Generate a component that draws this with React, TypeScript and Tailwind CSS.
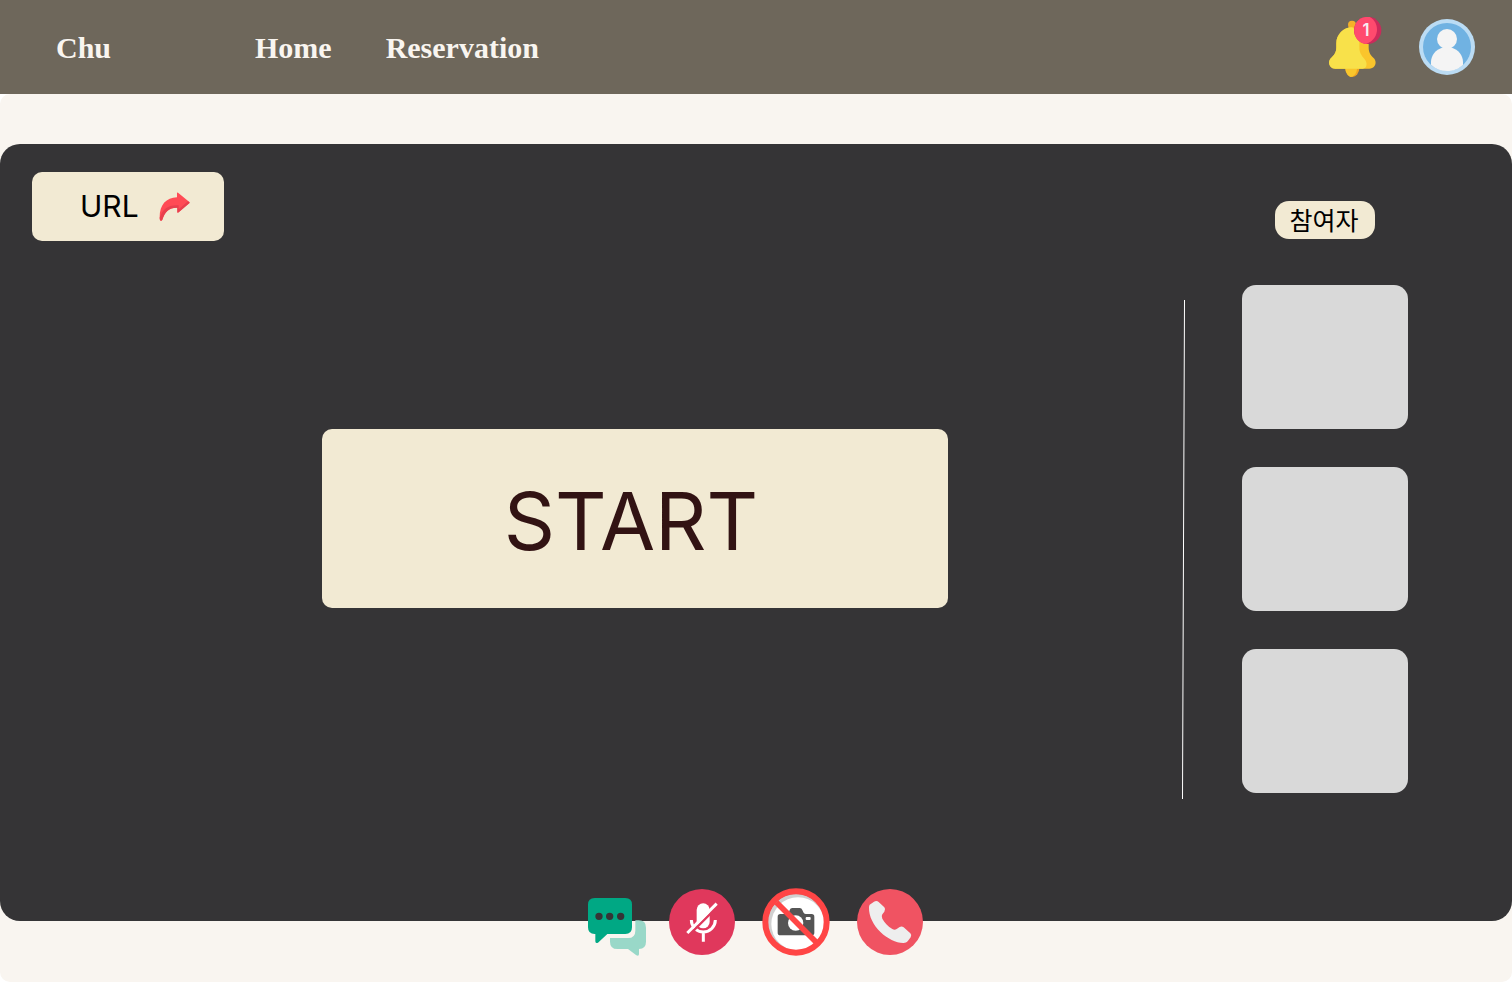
import React from "react";

function BellIcon() {
  return (
    <svg viewBox="57 51 159 180" className="h-[60px] w-[53px]" aria-hidden="true">
      <circle cx="126" cy="74" r="12" fill="#f5b029" />
      <path d="M106 204 a21 27 0 0 0 42 0z" fill="#f0a423" />
      <path d="M106 204 c0 15 8 25 17 27 c12 -3 18 -14 18 -27z" fill="#f9c62c" />
      <path d="M126 82 C100 82 79 104 79 130 V142 C79 158 72 166 64 173 C52 182 56 206 76 206 H178 C198 206 202 183 190 173 C182 166 176 158 176 142 V130 C176 104 152 82 126 82z" fill="#fac52c" />
      <path d="M126 82 C100 82 79 104 79 130 V142 C79 158 72 166 64 173 C52 182 56 206 76 206 H158 C170 206 174 190 164 178 C154 166 148 158 148 142 V130 C148 108 142 92 126 82z" fill="#f8e14a" />
      <circle cx="173" cy="91" r="41" fill="#cb2a5b" />
      <path d="M179 51 C120 45 118 126 168 132 C210 117 210 68 179 51z" fill="#ff4a6e" />
      <text x="168" y="109" textAnchor="middle" fontFamily="Inter, sans-serif" fontSize="50" fontWeight="600" fill="#f6eef1">1</text>
    </svg>
  );
}

function AvatarIcon() {
  return (
    <svg viewBox="327 55 168 168" className="size-14" aria-hidden="true">
      <circle cx="411" cy="139" r="84" fill="#bbdcf4" />
      <circle cx="411" cy="139" r="72" fill="#70b2e2" />
      <circle cx="411" cy="115" r="30" fill="#f4f4f4" />
      <path d="M363 184 C363 163 378 147 396 141 H426 C444 147 459 163 459 184 V192 C446 205 430 211 411 211 C392 211 376 205 363 192z" fill="#f4f4f4" />
    </svg>
  );
}

function ShareIcon() {
  return (
    <svg viewBox="415 94 93 87" className="h-[29px] w-[31px]" aria-hidden="true">
      <path d="M469 96 Q471 95 474 98 L506 124 Q508 126 506 128 L474 155 Q470 158 470 153 V141 C446 140 433 152 425 177 Q423 181 420 180 Q417 179 417 173 C416 133 436 111 469 110z" fill="#ff4b55" />
      <path d="M507 126 L474 155 Q470 158 470 153 V141 C446 140 433 152 425 177 Q423 181 420 180 Q417 179 417 171 C427 143 444 132 474 134 V146 L502 122z" fill="#e8404e" />
    </svg>
  );
}

function ChatIcon() {
  return (
    <svg viewBox="54 54 174 174" className="size-[58px]" aria-hidden="true">
      <path d="M196 121 H206 Q228 121 228 143 V185 Q228 206 207 207 V222 Q207 230 199 226 L174 207 H142 Q120 207 120 185 V174 H174 Q196 174 196 152z" fill="#99d8c8" />
      <path fillRule="evenodd" d="M74 54 H166 Q186 54 186 74 V142 Q186 162 166 162 H112 L84 188 Q76 192 76 184 V162 H74 Q54 162 54 142 V74 Q54 54 74 54z M76 109 a11 11 0 1 0 22 0 a11 11 0 1 0 -22 0z M108 109 a11 11 0 1 0 22 0 a11 11 0 1 0 -22 0z M141 109 a11 11 0 1 0 22 0 a11 11 0 1 0 -22 0z" fill="#00a884" />
    </svg>
  );
}

function MicOffIcon() {
  return (
    <svg viewBox="297 27 198 198" className="size-[66px]" aria-hidden="true">
      <circle cx="396" cy="126" r="99" fill="#e0385c" />
      <rect x="380" y="70" width="39" height="75" rx="19.5" fill="#fff" />
      <path d="M364 120 A36 36 0 0 0 436 120 M400 155 V185" fill="none" stroke="#fff" strokeWidth="9" />
      <path d="M356 166 L446 76" stroke="#e0385c" strokeWidth="7" />
      <path d="M352 159 L440 71" stroke="#fff" strokeWidth="9" />
    </svg>
  );
}

function CameraOffIcon() {
  return (
    <svg viewBox="37 22 204 204" className="size-[68px]" aria-hidden="true">
      <circle cx="139" cy="124" r="85" fill="#d0d0d0" />
      <circle cx="145" cy="130" r="80" fill="#fff" />
      <path d="M92 100 H112 Q116 100 118 95 L120 88 Q122 82 128 82 H150 Q156 82 158 88 L161 95 Q163 100 168 100 H186 Q194 100 194 108 V156 Q194 164 186 164 H92 Q84 164 84 156 V108 Q84 100 92 100z" fill="#555" />
      <circle cx="138" cy="127" r="23" fill="#fff" />
      <rect x="168" y="109" width="15" height="9" rx="3" fill="#fff" />
      <path d="M80 65 L199 184" stroke="#ff4545" strokeWidth="17" />
      <circle cx="139" cy="124" r="92" fill="none" stroke="#ff4545" strokeWidth="18" />
    </svg>
  );
}

function PhoneIcon() {
  return (
    <svg viewBox="321 27 198 198" className="size-[66px]" aria-hidden="true">
      <circle cx="420" cy="126" r="99" fill="#f05362" />
      <path d="M359 74 L372 65 Q380 60 386 66 L403 82 Q408 88 403 95 L397 103 Q393 109 397 116 C404 129 414 139 427 147 Q434 152 440 147 L449 141 Q455 137 461 142 L481 160 Q486 165 482 172 L473 184 Q469 189 461 189 C418 190 355 138 357 82 Q357 77 359 74z" fill="#eeeeee" />
    </svg>
  );
}

const participants = [1, 2, 3];

export default function App() {
  return (
    <div className="flex min-h-screen flex-col bg-white font-['Inter',sans-serif]">
      <header className="flex h-[94px] items-center bg-[#6e675b] pr-[37px] pl-14 font-['Liberation_Serif',serif] text-[30px] font-bold text-[#f9f5f0]">
        <a href="#chu" className="w-[199px]">Chu</a>
        <nav className="flex gap-[54px]">
          <a href="#home">Home</a>
          <a href="#reservation">Reservation</a>
        </nav>
        <div className="ml-auto flex items-center gap-[37px]">
          <button type="button" aria-label="Notifications"><BellIcon /></button>
          <button type="button" aria-label="Profile"><AvatarIcon /></button>
        </div>
      </header>

      <main className="flex-1 rounded-[10px] bg-[#f9f5f0] pt-[50px] pb-[25px]">
        <section className="flex rounded-[20px] bg-[#353436] pr-[104px] pb-[122px] pl-8">
          <div className="flex flex-1 flex-col items-start pt-7">
            <button type="button" className="flex h-[69px] w-48 items-center gap-5 rounded-[10px] bg-[#f2ead3] pl-12 text-[30px] text-black">
              URL
              <ShareIcon />
            </button>
            <div className="mt-[188px] flex w-full justify-center pl-14">
              <button type="button" className="h-[179px] w-full max-w-[626px] rounded-[10px] bg-[#f2ead3] pt-1 pr-2 text-[80px] leading-none text-[#321313]">
                START
              </button>
            </div>
          </div>

          <svg viewBox="0 0 3 499" className="mt-[156px] mr-[57px] h-[499px] w-[3px]" aria-hidden="true">
            <path d="M2.5 0 L0.5 499" stroke="#fff" strokeWidth="1" />
          </svg>

          <aside className="flex flex-col items-center pt-[57px]">
            <h2 className="flex h-[38px] w-[100px] items-center justify-center rounded-[14px] bg-[#f2ead3] pr-0.5 pb-0.5 font-['Noto_Sans_CJK_KR',sans-serif] text-[25px] leading-none text-black">
              참여자
            </h2>
            <ul className="mt-[46px] flex flex-col gap-[38px]">
              {participants.map((id) => (
                <li key={id} className="h-36 w-[166px] rounded-[14px] bg-[#d9d9d9]" />
              ))}
            </ul>
          </aside>
        </section>

        <div className="-mt-[33px] flex items-end justify-center gap-[23px] pr-px">
          <button type="button" aria-label="Chat"><ChatIcon /></button>
          <div className="flex items-center gap-[27px]">
            <button type="button" aria-label="Unmute microphone"><MicOffIcon /></button>
            <button type="button" aria-label="Turn camera on"><CameraOffIcon /></button>
            <button type="button" aria-label="Hang up"><PhoneIcon /></button>
          </div>
        </div>
      </main>
    </div>
  );
}
